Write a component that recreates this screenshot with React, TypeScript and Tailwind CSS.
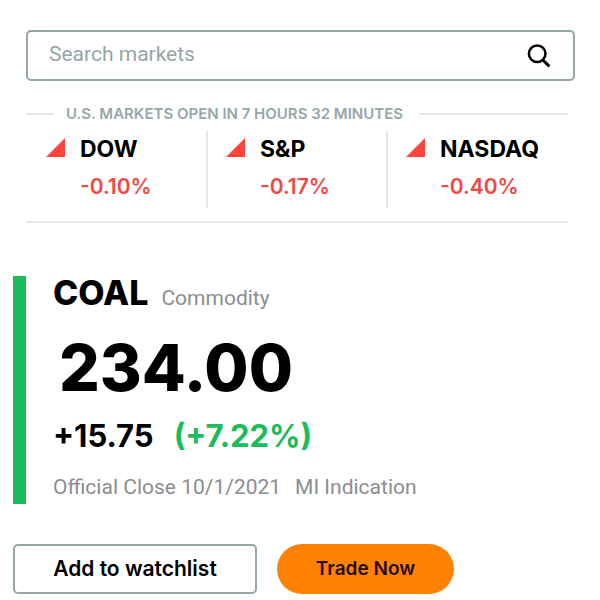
interface MarketIndex {
  name: string;
  change: string;
}

const indices: MarketIndex[] = [
  { name: "DOW", change: "-0.10%" },
  { name: "S&P", change: "-0.17%" },
  { name: "NASDAQ", change: "-0.40%" },
];

function SearchBar() {
  return (
    <form
      className="flex h-[51px] items-center rounded-[5px] border-2 border-[#94a7a9] pl-[21px] pr-[22px]"
      onSubmit={(e) => e.preventDefault()}
    >
      <input
        type="text"
        aria-label="Search markets"
        placeholder="Search markets"
        className="min-w-0 flex-1 bg-transparent pb-1 font-['Roboto',sans-serif] text-[21px] leading-7 outline-none placeholder:text-[#95a6a8]"
      />
      <button type="submit" aria-label="Search">
        <svg viewBox="0 0 24 24" className="size-6" fill="none" stroke="#000" strokeWidth="2.5">
          <circle cx="10.2" cy="9.8" r="8.3" />
          <path d="M15.8 16l6.6 6.4" strokeWidth="3" />
        </svg>
      </button>
    </form>
  );
}

function IndexItem({ name, change }: MarketIndex) {
  return (
    <li className="flex gap-[15px] border-l-2 border-[#e3e8e8] pl-[18px] first:border-l-transparent">
      <svg viewBox="0 0 19 19" className="mt-[7px] size-[19px] shrink-0" fill="#ff453d">
        <path d="M19 0v19H0z" />
      </svg>
      <div>
        <h3 className="pt-[2px] text-[23px] font-bold leading-8">{name}</h3>
        <p className="pt-[6px] text-[21px] font-semibold leading-8 text-[#ef4a43]">{change}</p>
      </div>
    </li>
  );
}

export default function App() {
  return (
    <main className="min-h-screen bg-white pt-[30px] font-['Inter',sans-serif] text-black">
      <header className="pl-[26px] pr-[25px]">
        <SearchBar />
        <section className="mt-[21px] mr-[7px] border-b-2 border-[#e6e9e9] pb-[13px]">
          <div className="flex h-6 items-center">
            <span className="h-[2px] w-[28px] bg-[#e1e8e8]" />
            <h2 className="whitespace-nowrap pl-3 pr-4 text-[15px] font-semibold text-[#95a7a9]">
              U.S. MARKETS OPEN IN 7 HOURS 32 MINUTES
            </h2>
            <span className="h-[2px] flex-1 bg-[#e1e8e8]" />
          </div>
          <ul className="mt-[5px] grid h-[77px] grid-cols-3 pr-[2px]">
            {indices.map((item) => (
              <IndexItem key={item.name} {...item} />
            ))}
          </ul>
        </section>
      </header>

      <section className="mt-[53px] ml-[13px] h-[228px] border-l-[13px] border-[#1abc5b] pl-[27px]">
        <div className="flex h-9 items-baseline gap-[13px] pt-px">
          <h1 className="text-[34px] font-extrabold leading-8">COAL</h1>
          <span className="font-['Roboto',sans-serif] text-[21px] leading-8 text-[#8b8d91]">Commodity</span>
        </div>
        <p className="mt-5 pl-[6px] text-[64px] font-extrabold leading-[72px]">234.00</p>
        <p className="mt-3 flex gap-5 text-[31px] font-bold leading-10">
          <span>+15.75</span>
          <span className="text-[#1abc5b]">(+7.22%)</span>
        </p>
        <p className="mt-[17px] flex gap-[14px] font-['Roboto',sans-serif] text-[21px] leading-7 text-[#8b8d91]">
          <span>Official Close 10/1/2021</span>
          <span>MI Indication</span>
        </p>
      </section>

      <div className="mt-10 flex gap-5 pl-[13px] font-semibold">
        <button type="button" className="h-[50px] w-[244px] rounded-[5px] border-2 border-[#94a7a9] text-[21px]">
          Add to watchlist
        </button>
        <button type="button" className="h-[50px] w-[177px] rounded-full bg-[#ff8205] text-[19px] text-[#250b08]">
          Trade Now
        </button>
      </div>
    </main>
  );
}
